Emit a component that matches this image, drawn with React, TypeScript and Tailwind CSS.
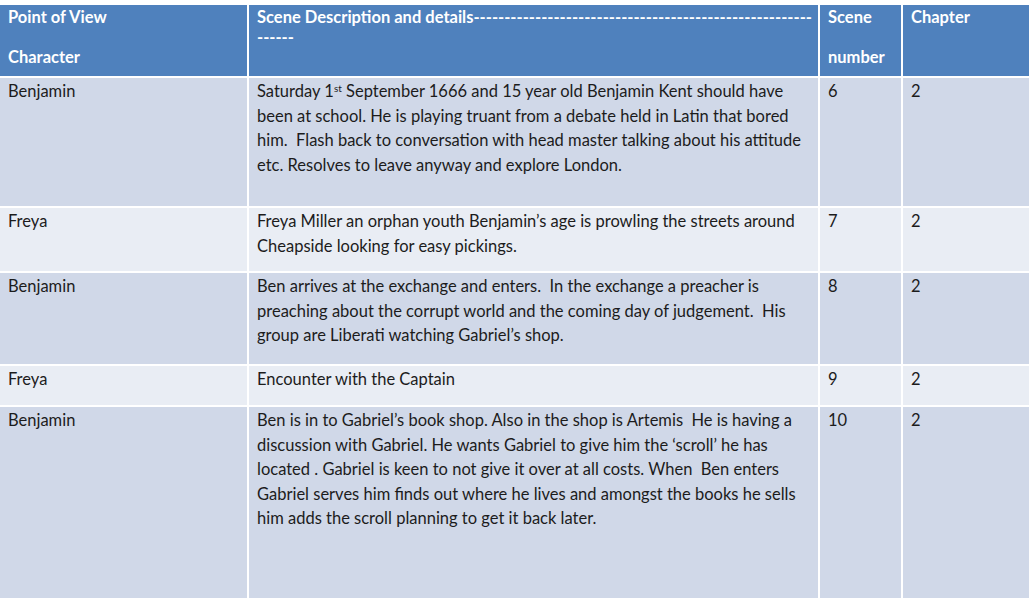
const rows: {
  pov: string;
  lines: React.ReactNode[];
  scene: string;
  chapter: string;
  h: string;
  bg: string;
}[] = [
  {
    pov: "Benjamin",
    lines: [
      <>
        Saturday 1<sup className="text-[10px]">st</sup> September 1666 and 15 year old Benjamin Kent should have
      </>,
      "been at school. He is playing truant from a debate held in Latin that bored",
      "him.  Flash back to conversation with head master talking about his attitude",
      "etc. Resolves to leave anyway and explore London.",
    ],
    scene: "6",
    chapter: "2",
    h: "h-[128px]",
    bg: "bg-[#d0d8e8]",
  },
  {
    pov: "Freya",
    lines: [
      "Freya Miller an orphan youth Benjamin\u2019s age is prowling the streets around",
      "Cheapside looking for easy pickings.",
    ],
    scene: "7",
    chapter: "2",
    h: "h-[63px]",
    bg: "bg-[#e9edf4]",
  },
  {
    pov: "Benjamin",
    lines: [
      "Ben arrives at the exchange and enters.  In the exchange a preacher is",
      "preaching about the corrupt world and the coming day of judgement.  His",
      "group are Liberati watching Gabriel\u2019s shop.",
    ],
    scene: "8",
    chapter: "2",
    h: "h-[91px]",
    bg: "bg-[#d0d8e8]",
  },
  {
    pov: "Freya",
    lines: ["Encounter with the Captain"],
    scene: "9",
    chapter: "2",
    h: "h-[39px]",
    bg: "bg-[#e9edf4]",
  },
  {
    pov: "Benjamin",
    lines: [
      "Ben is in to Gabriel\u2019s book shop. Also in the shop is Artemis  He is having a",
      "discussion with Gabriel. He wants Gabriel to give him the \u2018scroll\u2019 he has",
      "located . Gabriel is keen to not give it over at all costs. When  Ben enters",
      "Gabriel serves him finds out where he lives and amongst the books he sells",
      "him adds the scroll planning to get it back later.",
    ],
    scene: "10",
    chapter: "2",
    h: "h-[200px]",
    bg: "bg-[#d0d8e8]",
  },
];

function Cell({ bg, children }: { bg: string; children: React.ReactNode }) {
  return <div className={`${bg} px-2 pt-[1px] whitespace-pre`}>{children}</div>;
}

export default function App() {
  return (
    <div
      className="w-[1033px] h-[598px] overflow-hidden bg-white pt-[5px] text-[16.5px] leading-[24.5px] text-[#1c1c1c]"
      style={{ fontFamily: "Lato, 'Open Sans', sans-serif" }}
    >
      <div className="grid grid-cols-[247px_569px_81px_126px] gap-[2px] w-[1029px]">
        {/* Header */}
        <div className="h-[71px] bg-[#4f81bd] px-2 pt-[3px] font-bold text-white leading-[18px]">
          <p>Point of View</p>
          <p className="mt-[22px]">Character</p>
        </div>
        <div className="bg-[#4f81bd] px-2 pt-[3px] font-bold text-white leading-[18px] whitespace-pre overflow-hidden">
          <p>Scene Description and details-------------------------------------------------------</p>
          <p className="mt-[2px]">------</p>
        </div>
        <div className="bg-[#4f81bd] px-2 pt-[3px] font-bold text-white leading-[18px]">
          <p>Scene</p>
          <p className="mt-[22px]">number</p>
        </div>
        <div className="bg-[#4f81bd] px-2 pt-[3px] font-bold text-white leading-[18px]">
          <p>Chapter</p>
        </div>

        {rows.map((r, i) => (
          <div key={i} className="contents">
            <div className={`${r.h} ${r.bg} px-2 pt-[1px]`}>{r.pov}</div>
            <Cell bg={r.bg}>
              {r.lines.map((l, j) => (
                <div key={j}>{l}</div>
              ))}
            </Cell>
            <Cell bg={r.bg}>{r.scene}</Cell>
            <Cell bg={r.bg}>{r.chapter}</Cell>
          </div>
        ))}
      </div>
    </div>
  );
}
